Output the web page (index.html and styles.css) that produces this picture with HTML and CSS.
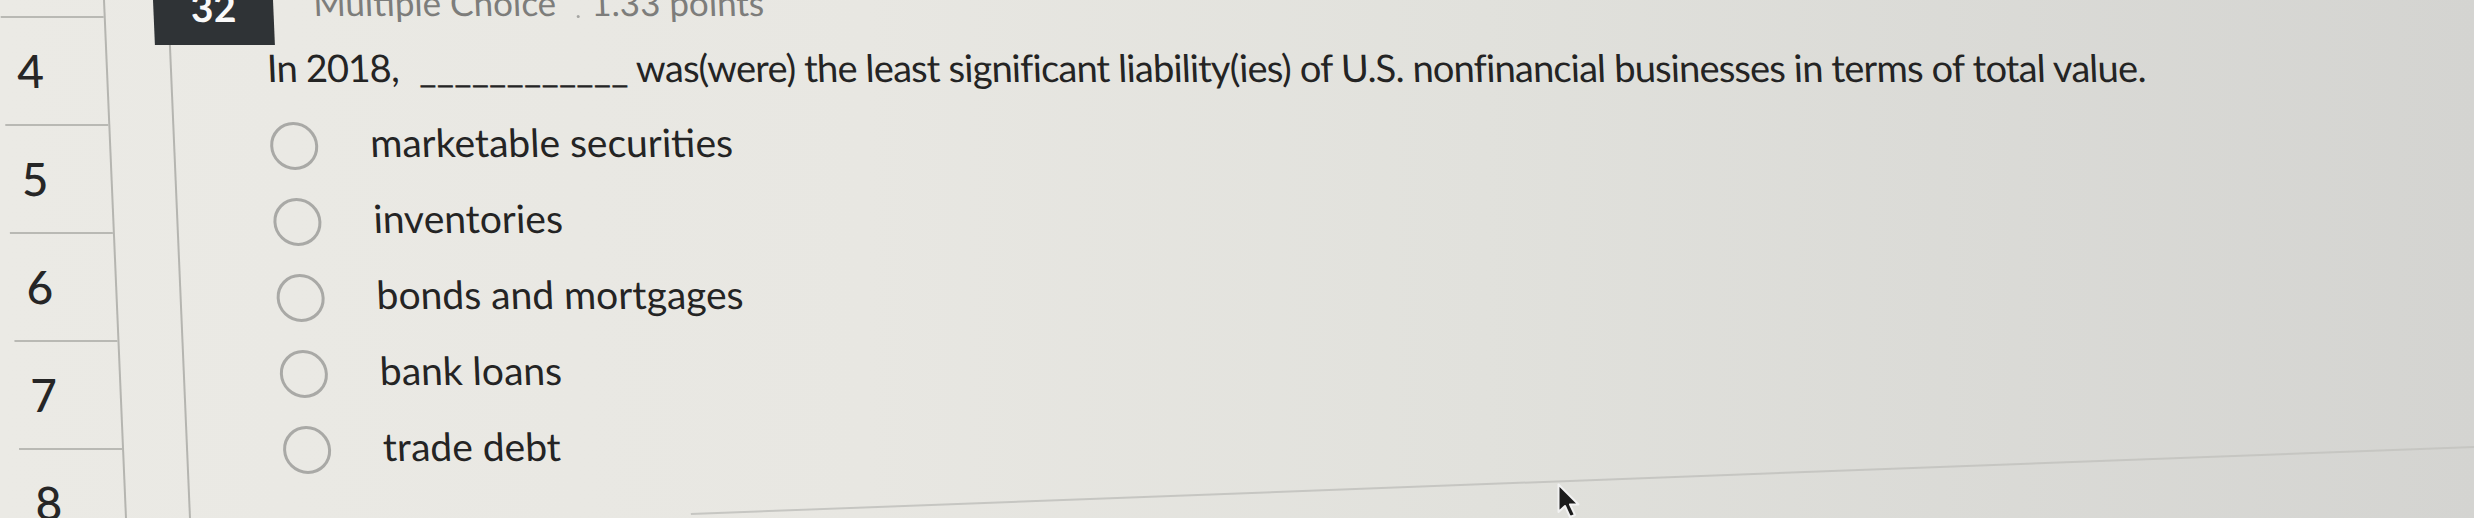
FILE: index.html
```html
<!DOCTYPE html>
<html lang="en">
<head>
<meta charset="utf-8">
<title>Question 32</title>
<link rel="stylesheet" href="styles.css">
</head>
<body>
<div class="page">
  <nav class="numcol">
    <div class="numrow first"></div>
    <div class="numrow"><span>4</span></div>
    <div class="numrow"><span>5</span></div>
    <div class="numrow"><span>6</span></div>
    <div class="numrow"><span>7</span></div>
    <div class="numrow"><span>8</span></div>
  </nav>
  <div class="gutter"></div>
  <main class="main">
    <header class="qhead">
      <div class="qnum"><span>32</span></div>
      <span class="qtype">Multiple Choice</span>
      <span class="qdot"></span>
      <span class="qpts">1.33 points</span>
    </header>
    <p class="question">In 2018, <span class="blank">____________</span> was(were) the least significant liability(ies) of U.S. nonfinancial businesses in terms of total value.</p>
    <ul class="options">
      <li class="option"><span class="radio"></span><span class="label">marketable securities</span></li>
      <li class="option"><span class="radio"></span><span class="label">inventories</span></li>
      <li class="option"><span class="radio"></span><span class="label">bonds and mortgages</span></li>
      <li class="option"><span class="radio"></span><span class="label">bank loans</span></li>
      <li class="option"><span class="radio"></span><span class="label">trade debt</span></li>
    </ul>
    <div class="rule"></div>
  </main>
</div>
<svg class="cursor" width="24" height="36" viewBox="0 0 24 36">
  <path d="M1.5 1.5 L1.5 29 L8 23 L13 34 L18 32 L13 21.5 L21.5 21.5 Z" fill="#1c1c1c" stroke="#f2f2f2" stroke-width="2" stroke-linejoin="round"/>
</svg>
</body>
</html>
```
FILE: styles.css
```css
html, body {
  margin: 0;
  padding: 0;
}
body {
  width: 2474px;
  height: 518px;
  overflow: hidden;
  position: relative;
  background: linear-gradient(to right, #ebeae5 0%, #e8e7e2 35%, #e1e1dc 60%, #d4d4d1 100%);
  font-family: Lato, "Open Sans", sans-serif;
  color: #242424;
}
.page {
  display: flex;
  height: 518px;
  transform: skewX(2.43deg);
  transform-origin: 0 0;
}
.numcol {
  width: 103px;
  flex: none;
  display: flex;
  flex-direction: column;
  border-right: 2px solid #b5b5b0;
}
.numrow {
  height: 106px;
  flex: none;
  border-bottom: 2px solid #b9b9b4;
  display: flex;
  align-items: center;
  padding-left: 14px;
  font-size: 46px;
  font-weight: 500;
  line-height: 1;
  color: #262626;
}
.numrow.first {
  height: 16px;
}
.gutter {
  width: 62px;
  flex: none;
}
.main {
  flex: 1;
  border-left: 2px solid #b5b5b0;
  min-width: 0;
}
.qhead {
  height: 45px;
  display: flex;
  align-items: flex-start;
  margin-left: -16px;
}
.qnum {
  width: 120px;
  height: 45px;
  background: #2f3336;
  display: flex;
  justify-content: center;
  align-items: flex-end;
  overflow: hidden;
  flex: none;
}
.qnum span {
  color: #fafafa;
  font-weight: 700;
  font-size: 39px;
  line-height: 1;
  padding-bottom: 18px;
}
.qtype, .qpts {
  font-size: 35px;
  line-height: 1;
  color: #7d7d7b;
  margin-top: -15px;
  white-space: nowrap;
}
.qtype {
  margin-left: 40px;
}
.qdot {
  width: 3px;
  height: 3px;
  border-radius: 50%;
  background: #a5a5a2;
  margin: 15px 12px 0 20px;
}
.question {
  margin: 3px 0 0;
  padding-left: 95px;
  font-size: 38px;
  letter-spacing: -0.8px;
  line-height: 1;
  white-space: nowrap;
}
.blank {
  margin-left: 11px;
  letter-spacing: 0;
}
.options {
  list-style: none;
  margin: 18px 0 0;
  padding: 0 0 0 95px;
}
.option {
  height: 76px;
  display: flex;
  align-items: center;
}
.radio {
  width: 42px;
  height: 42px;
  border: 3px solid #a9a9a6;
  border-radius: 50%;
  flex: none;
  margin-top: 8px;
  margin-right: 52px;
}
.label {
  font-size: 39px;
  line-height: 76px;
  white-space: nowrap;
}
.rule {
  margin: 29px 0 0 500px;
  width: 1900px;
  height: 0;
  border-top: 2px solid #c6c6c2;
  transform: rotate(-2.15deg);
  transform-origin: 0 0;
}
.cursor {
  position: absolute;
  left: 1557px;
  top: 483px;
}
```
